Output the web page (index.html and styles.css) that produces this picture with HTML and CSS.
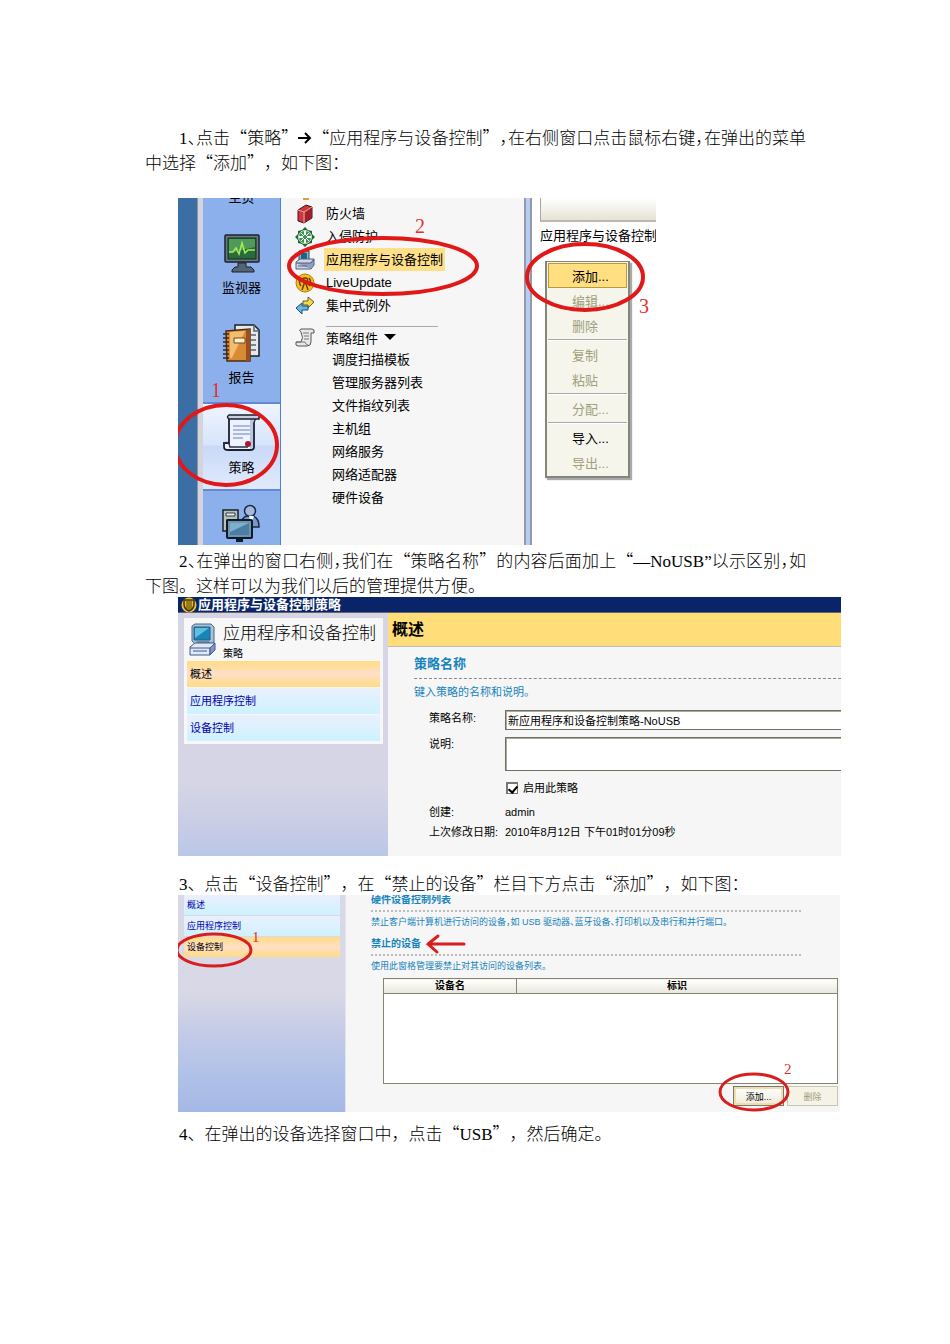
FILE: index.html
```html
<!DOCTYPE html>
<html lang="zh-CN">
<head>
	<meta charset="utf-8">
	<meta name="viewport" content="width=device-width, initial-scale=1.0">
	<link rel="stylesheet" href="styles.css">
	<title>禁用USB设备</title>
</head>
<body>
	<main>
		<p><span class="lat">1</span><span class="half">、</span>点击“策略”<svg class="arrow" width="14" height="12" viewBox="0 0 14 12"><path d="M0 6h12M7 1l5 5-5 5" fill="none" stroke="#000" stroke-width="2"/></svg>“应用程序与设备控制”<span class="half">，</span>在右侧窗口点击鼠标右键<span class="half">，</span>在弹出的菜单中选择“添加”，如下图：</p>

		<figure class="shot console">
			<div class="desktop"></div>
			<nav class="side">
				<a href="#" class="side-item"><span class="side-icon"></span>主页</a>
				<a href="#" class="side-item">
					<svg class="side-icon" width="40" height="40" viewBox="0 0 40 40">
						<path d="M16 30h8v4h5l3 3v2H10v-2l3-3h3z" fill="#566574" stroke="#18222c"/>
						<rect x="3" y="2" width="34" height="27" rx="1" fill="#6a7880" stroke="#18222c" stroke-width="1.5"/>
						<rect x="6" y="5" width="28" height="21" fill="#286b3c" stroke="#102d1b"/>
						<path d="M7 6h26v8L7 20z" fill="#4f9a59"/>
						<path d="M7 19h4l3-4 3 6 3-11 3 10 3-3h7" fill="none" stroke="#a9ec55" stroke-width="1.5"/>
					</svg>
					监视器
				</a>
				<a href="#" class="side-item">
					<svg class="side-icon" width="40" height="40" viewBox="0 0 40 40">
						<path d="M13 2h19l5 5v26H13z" fill="#e5e9eb" stroke="#1c2025" stroke-width="1.5"/>
						<path d="M32 2v6h5M29 12h5M29 17h5M29 22h5M29 27h5" fill="none" stroke="#59646c" stroke-width="1.5"/>
						<path d="M4 8l24-2v32H5z" fill="#d88a35" stroke="#4b2b12" stroke-width="1.5"/>
						<path d="M8 9l15-1-13 27H8z" fill="#f3bd70"/>
						<path d="M24 7l4-1v32h-4z" fill="#9b4e20"/>
						<path d="M12 15h11v5H12z" fill="#fff0c8" stroke="#6a4824"/>
						<path d="M1 11h6M1 15h6M1 19h6M1 23h6M1 27h6M1 31h6M1 35h6" stroke="#38291c" stroke-width="1.5"/>
					</svg>
					报告
				</a>
				<a href="#" class="side-item active">
					<svg class="side-icon" width="40" height="40" viewBox="0 0 40 40">
						<path d="M7 4h27l-2 5v25q0 3-4 3H6q-4 0-4-3v-4h5z" fill="#eef2fd" stroke="#1a2030" stroke-width="1.8"/>
						<path d="M28 6h5l-2 4v24q-1 2-3 2z" fill="#b9c6e6"/>
						<path d="M7 2h30v4H7q-3-2 0-4z" fill="#c5d0e3" stroke="#1a2030" stroke-width="1.5"/>
						<path d="M2 30q5-2 6 4H26" fill="none" stroke="#27304a" stroke-width="1.5"/>
						<path d="M11 13h17M11 17h17M11 21h17M11 25h10" stroke="#90a8d9" stroke-width="1.5"/>
						<circle cx="26" cy="31" r="3" fill="#a51d2d"/>
					</svg>
					策略
				</a>
				<a href="#" class="side-item">
					<svg class="side-icon" width="40" height="40" viewBox="0 0 40 40">
						<path d="M19 24q0-10 6-11h6q6 2 6 11z" fill="#7b98c8" stroke="#192943" stroke-width="1.5"/>
						<circle cx="28" cy="8" r="5.5" fill="#a2badd" stroke="#192943" stroke-width="1.5"/>
						<path d="M27 13l2 8 3-8" fill="#fff"/>
						<rect x="1" y="7" width="15" height="21" fill="#b8c2bd" stroke="#18212a" stroke-width="1.5"/>
						<path d="M4 10h9v3H4zM4 17h9" fill="#eee" stroke="#303840"/>
						<rect x="5" y="17" width="25" height="18" rx="1" fill="#7192b0" stroke="#0d1a28" stroke-width="2"/>
						<path d="M8 20h19v12H8z" fill="#4a7fa3"/>
						<path d="M8 20h19L8 29z" fill="#7fb0ca"/>
						<path d="M14 36h7v3h-7z" fill="#111d29"/>
					</svg>
				</a>
			</nav>
			<div class="policy-list">
				<ul>
					<li>
						<svg width="20" height="20" viewBox="0 0 20 20"><path d="M3 6l8-5 6 2v11l-8 5-6-2z" fill="#c93940" stroke="#4b1118"/><path d="M3 6l6 2 8-5M9 8v11" fill="none" stroke="#f4a0a0"/><path d="M10 9l6-5v10l-6 4z" fill="#9d202b"/></svg>
						<a href="#">防火墙</a>
					</li>
					<li>
						<svg width="20" height="20" viewBox="0 0 20 20"><path d="M10 0l3 3 4 1 0 3 3 3-3 3 0 3-4 1-3 3-3-3-4-1 0-3-3-3 3-3 0-3 4-1z" fill="#176b30"/><circle cx="10" cy="10" r="6.5" fill="#3f9650" stroke="#cfe8d2"/><path d="M10 4v4M10 12v4M4 10h4M12 10h4" stroke="#fff" stroke-width="2"/><path d="M6 6l3 3M11 11l3 3M14 6l-3 3M9 11l-3 3" stroke="#fff"/></svg>
						<a href="#">入侵防护</a>
					</li>
					<li>
						<svg width="20" height="20" viewBox="0 0 20 20"><path d="M4 1h10v10H4z" fill="#8eb5cf" stroke="#30485b"/><path d="M6 3h6v6H6z" fill="#176782"/><path d="M1 12l4-3h14l-3 4v6H1z" fill="#cfd6ea" stroke="#53617a"/><path d="M1 13h15l3-4v6l-3 4" fill="#929fbf" stroke="#53617a"/><path d="M3 16h9" stroke="#53617a"/></svg>
						<a href="#" class="picked">应用程序与设备控制</a>
					</li>
					<li>
						<svg width="20" height="20" viewBox="0 0 20 20"><circle cx="10" cy="10" r="9" fill="#f9bc1d" stroke="#b57b08"/><path d="M10 8l-3 9M10 8l3 9M6 13q-3-4 0-8M14 13q3-4 0-8M8 9q-2-4 2-4 4 0 2 4" fill="none" stroke="#5e430a" stroke-width="1.5"/></svg>
						<a href="#">LiveUpdate</a>
					</li>
					<li>
						<svg width="20" height="20" viewBox="0 0 20 20"><path d="M8 5h5V1l6 5-6 6V9H8z" fill="#f3d948" stroke="#665b23"/><path d="M13 10H7V7l-6 5 6 6v-4h6z" fill="#69b7e4" stroke="#1b4d70"/></svg>
						<a href="#">集中式例外</a>
					</li>
				</ul>
				<div class="components">
					<svg width="20" height="20" viewBox="0 0 20 20"><path d="M6 2h11q3 0 2 4h-3v9q0 4-4 4H3q-3 0-2-4h5q3-4 0-10-3-2 0-3z" fill="#e8e8e8" stroke="#555"/><path d="M8 6h6M9 9h5M9 12h5M1 15h9q1 3 3 3" fill="none" stroke="#777"/></svg>
					策略组件
					<svg width="12" height="7" viewBox="0 0 12 7"><path d="M0 0h12L6 6z"/></svg>
				</div>
				<ul class="sub">
					<li><a href="#">调度扫描模板</a></li>
					<li><a href="#">管理服务器列表</a></li>
					<li><a href="#">文件指纹列表</a></li>
					<li><a href="#">主机组</a></li>
					<li><a href="#">网络服务</a></li>
					<li><a href="#">网络适配器</a></li>
					<li><a href="#">硬件设备</a></li>
				</ul>
			</div>
			<div class="splitter"></div>
			<div class="detail">
				<div class="column-head"></div>
				<div class="detail-title">应用程序与设备控制</div>
				<div class="menu">
					<button class="hot">添加...</button>
					<button disabled>编辑...</button>
					<button disabled>删除</button>
					<hr>
					<button disabled>复制</button>
					<button disabled>粘贴</button>
					<hr>
					<button disabled>分配...</button>
					<hr>
					<button>导入...</button>
					<button disabled>导出...</button>
				</div>
			</div>
			<svg class="marks" width="478" height="347">
				<g fill="none" stroke="#e01818" stroke-width="4">
					<ellipse cx="48" cy="247" rx="51" ry="40"/>
					<ellipse cx="205" cy="68" rx="94" ry="28"/>
					<ellipse cx="407" cy="79" rx="58" ry="33"/>
				</g>
				<text x="33" y="199">1</text>
				<text x="237" y="35">2</text>
				<text x="461" y="115">3</text>
			</svg>
		</figure>

		<p><span class="lat">2</span><span class="half">、</span>在弹出的窗口右侧<span class="half">，</span>我们在“策略名称”的内容后面加上“<span class="lat">—NoUSB”</span>以示区别<span class="half">，</span>如下图。这样可以为我们以后的管理提供方便。</p>

		<figure class="shot policy">
			<div class="titlebar">
				<svg width="16" height="16" viewBox="0 0 16 16"><circle cx="8" cy="8" r="7.5" fill="#f5c52d"/><path d="M3 3h10v4q0 5-5 7-5-2-5-7z" fill="#edbb20" stroke="#3a3312" stroke-width="1.5"/><path d="M6 4v8M8 4v9M10 4v8" stroke="#4b3d10"/></svg>
				应用程序与设备控制策略
			</div>
			<div class="policy-body">
				<div class="policy-side">
					<div class="card">
						<div class="card-head">
							<svg width="28" height="34" viewBox="0 0 28 34">
								<path d="M6 1h16l3 3v15l-3 2H6l-3-3V3z" fill="#a6c3db" stroke="#496783"/>
								<path d="M5 4h16v13H5z" fill="#1586b7" stroke="#295c80"/>
								<path d="M6 5h14L6 15z" fill="#61bfdd"/>
								<path d="M8 18h12l3 4H6z" fill="#718ca9"/>
								<path d="M1 24l5-4h20l-5 5v7H1z" fill="#e0e7f7" stroke="#405a8b"/>
								<path d="M21 25l5-5v7l-5 5z" fill="#8096c3" stroke="#405a8b"/>
								<path d="M1 25h20M4 28h14" stroke="#405a8b"/>
							</svg>
							<div>
								<h2>应用程序和设备控制</h2>
								<small>策略</small>
							</div>
						</div>
						<nav class="tabs">
							<a href="#" class="current">概述</a>
							<a href="#">应用程序控制</a>
							<a href="#">设备控制</a>
						</nav>
					</div>
				</div>
				<div class="policy-main">
					<h2>概述</h2>
					<section>
						<h3>策略名称</h3>
						<p class="hint">键入策略的名称和说明。</p>
						<form>
							<label for="name">策略名称:</label>
							<input type="text" id="name" value="新应用程序和设备控制策略-NoUSB">
							<label for="desc">说明:</label>
							<textarea id="desc"></textarea>
							<label class="check"><input type="checkbox" checked>启用此策略</label>
							<span>创建:</span>
							<span>admin</span>
							<span>上次修改日期:</span>
							<span>2010年8月12日 下午01时01分09秒</span>
						</form>
					</section>
				</div>
			</div>
		</figure>

		<p class="step3"><span class="lat">3</span>、点击“设备控制”，在“禁止的设备”栏目下方点击“添加”，如下图：</p>

		<figure class="shot devices">
			<div class="devices-side">
				<nav class="tabs">
					<a href="#">概述</a>
					<a href="#">应用程序控制</a>
					<a href="#" class="current">设备控制</a>
				</nav>
			</div>
			<div class="devices-main">
				<h3>硬件设备控制列表</h3>
				<p class="hint">禁止客户端计算机进行访问的设备，如 USB 驱动器、蓝牙设备、打印机以及串行和并行端口。</p>
				<h3>禁止的设备</h3>
				<p class="hint">使用此窗格管理要禁止对其访问的设备列表。</p>
				<table>
					<thead>
						<tr><th class="device-name">设备名</th><th>标识</th></tr>
					</thead>
					<tbody>
						<tr><td colspan="2"></td></tr>
					</tbody>
				</table>
				<div class="actions">
					<button class="add">添加...</button>
					<button disabled>删除</button>
				</div>
			</div>
			<svg class="marks small" width="662" height="217">
				<g fill="none" stroke="#d81e1e" stroke-width="3">
					<ellipse cx="36" cy="55" rx="37" ry="16"/>
					<ellipse cx="576" cy="197" rx="34" ry="18"/>
					<path d="M286 49h-36M260 41l-10 8 9 8" stroke-linecap="round"/>
				</g>
				<text x="74" y="47">1</text>
				<text x="606" y="179">2</text>
			</svg>
		</figure>

		<p class="step4"><span class="lat">4</span>、在弹出的设备选择窗口中，点击“<span class="lat">USB</span>”，然后确定。</p>
	</main>
</body>
</html>
```

FILE: styles.css
```css
* {
	box-sizing: border-box;
}
body {
	margin: 0;
	background-color: white;
	color: black;
	font-family: "Noto Sans CJK SC", sans-serif;
}
main {
	padding: 124px 109px 180px 145px;
}
main > p {
	margin: 0 35px 0 0;
	font-size: 17px;
	font-weight: 300;
	line-height: 25px;
	text-indent: 34px;
	text-align: justify;
	text-spacing-trim: space-all;
}
.lat {
	font-family: "Liberation Serif", serif;
	font-weight: 400;
	line-height: 1;
}
.half {
	font-feature-settings: "halt";
}
a {
	color: inherit;
	text-decoration: none;
}
ul {
	list-style: none;
	margin: 0;
	padding: 0;
}
button {
	font-family: inherit;
}

/* figures */
.shot {
	position: relative;
	overflow: hidden;
	margin: 0 0 0 33px;
	font-family: "Liberation Sans", "Noto Sans CJK SC", sans-serif;
	background-color: #f6f6f6;
}
.marks {
	position: absolute;
	left: 0;
	top: 0;
	pointer-events: none;
}
.marks text {
	font-family: "Liberation Serif", serif;
	font-size: 20px;
	fill: #e03030;
}
.marks.small text {
	font-size: 15px;
}

/* console */
.console {
	display: flex;
	max-width: 478px;
	height: 347px;
	margin-top: 24px;
	margin-bottom: 2px;
	font-size: 13px;
}
.desktop {
	width: 25px;
	background-color: #3a6ea5;
	border-right: 5px solid #d4d4dc;
	box-shadow: inset -1px 0 #8996aa;
}
.side {
	width: 78px;
	background-color: #8cb0ec;
	border-right: 1px solid #4c80d4;
}
.side-item {
	display: flex;
	flex-direction: column;
	align-items: center;
	gap: 7px;
	height: 90px;
	padding-top: 9px;
	line-height: 16px;
}
.side-item:first-child {
	margin-top: -64px;
}
.side-item.active {
	height: 87px;
	margin-bottom: 3px;
	background: linear-gradient(#f0f5ff, #d7e4fb 48%, #c8daf8 50%, #e0eafc);
	border-bottom: 2px solid #6488d8;
	box-shadow: 0 -2px #6488d8;
}
.side-icon {
	flex: none;
	height: 40px;
}
.policy-list {
	width: 243px;
	padding: 4px 14px 0;
	background: linear-gradient(#d9a03a, #d9a03a) 22px 0 / 6px 2px no-repeat;
}
.policy-list li {
	display: flex;
	align-items: center;
	gap: 9px;
	height: 23px;
}
.policy-list li a {
	padding: 0 2px;
	line-height: 23px;
}
.policy-list .picked {
	background-color: #ffe08a;
}
.components {
	display: flex;
	align-items: center;
	gap: 6px;
	height: 22px;
	margin-top: 9px;
	background: linear-gradient(#aaa, #aaa) 31px 0 / 112px 1px no-repeat;
}
.components svg:first-child {
	margin-right: 5px;
}
.sub {
	padding-left: 35px;
}
.splitter {
	width: 8px;
	background-color: #b4ccf6;
	border: solid #9499a5;
	border-width: 0 2px;
}
.detail {
	flex: 1;
	min-width: 0;
	padding-left: 8px;
	background-color: white;
}
.column-head {
	height: 24px;
	background: linear-gradient(#fff, #e6e3d5);
	border-left: 1px solid #aaa797;
	border-bottom: 2px solid #bbb8a8;
}
.detail-title {
	line-height: 28px;
	white-space: nowrap;
}
.menu {
	width: 85px;
	margin: 11px 0 0 5px;
	padding: 1px;
	background-color: #f6f5ec;
	border: 2px solid #85867b;
	border-top-width: 1px;
	box-shadow: 2px 2px 1px #aaa;
}
.menu button {
	display: block;
	width: 100%;
	height: 25px;
	padding: 0 0 0 23px;
	border: 1px solid transparent;
	background: none;
	font-size: 13px;
	text-align: left;
	color: black;
}
.menu button:disabled {
	color: #a19f7c;
}
.menu .hot {
	background-color: #ffdf80;
	border-color: #b99b38;
}
.menu hr {
	height: 2px;
	margin: 1px 0;
	border: 0;
	border-top: 1px solid #aaa;
	background-color: white;
}

/* policy window */
.titlebar {
	display: flex;
	align-items: center;
	gap: 1px;
	height: 16px;
	padding-left: 3px;
	background-color: #0a246a;
	border-bottom: 1px solid #666;
	color: white;
	font-size: 13px;
	font-weight: bold;
	line-height: 15px;
}
.policy-body {
	display: flex;
	height: 243px;
}
.policy-side {
	width: 210px;
	padding: 5px 5px 0 6px;
	background: linear-gradient(#d5d5e5 70%, #c6cbe6 90%, #b9c8e6);
}
.card {
	padding: 3px;
	background-color: #f7f7f7;
}
.card-head {
	display: flex;
	gap: 6px;
	height: 40px;
	padding-left: 2px;
}
.card-head svg {
	margin-top: 2px;
}
.card-head h2 {
	margin: 0;
	font-size: 17px;
	font-weight: 300;
	line-height: 26px;
	white-space: nowrap;
}
.card-head small {
	display: block;
	font-size: 10px;
	line-height: 14px;
}
.tabs a {
	display: block;
	height: 26px;
	margin-bottom: 1px;
	padding-left: 3px;
	background: linear-gradient(#ebf0fd, #cdf2ff);
	color: #0000b0;
	font-size: 11px;
	line-height: 26px;
}
.tabs a:last-child {
	margin-bottom: 0;
}
.tabs .current {
	background: linear-gradient(#ffdc82, #ffdfc8 50%, #ffdc82);
	color: black;
}
.policy-main {
	flex: 1;
	min-width: 0;
}
.policy-main h2 {
	margin: 0;
	padding-left: 4px;
	background-color: #ffde7a;
	border-bottom: 1px solid #bbb;
	font-size: 16px;
	line-height: 33px;
}
.policy-main section {
	padding: 6px 0 0 26px;
}
h3 {
	margin: 0;
	color: #1684bc;
}
.policy-main h3 {
	border-bottom: 1px dashed #888;
	font-size: 13px;
	line-height: 22px;
	padding-bottom: 3px;
}
.hint {
	margin: 0;
	color: #1684bc;
	white-space: nowrap;
}
.policy-main .hint {
	font-size: 11px;
	line-height: 26px;
}
form {
	display: grid;
	grid-template-columns: 76px 1fr;
	padding: 5px 0 0 15px;
	font-size: 11px;
	line-height: 16px;
	white-space: nowrap;
}
form input[type=text],
textarea {
	display: block;
	width: 100%;
	height: 20px;
	margin: 0;
	padding: 0 2px;
	background-color: white;
	border: 1px solid #6e7060;
	border-right: 0;
	border-radius: 0;
	box-shadow: inset 1px 1px #aaa99c;
	color: black;
	font-family: inherit;
	font-size: 11px;
	resize: none;
}
form textarea {
	height: 34px;
	margin: 7px 0 9px;
}
form label[for=desc] {
	padding-top: 6px;
}
.check {
	grid-column: 2;
	display: flex;
	align-items: center;
	gap: 5px;
	height: 16px;
	margin-bottom: 8px;
}
.check input {
	appearance: none;
	width: 12px;
	height: 12px;
	margin: 0 0 0 1px;
	background-color: white;
	border: 1px solid #777;
	border-width: 2px 1px 1px 2px;
}
.check input:checked::before {
	content: "";
	display: block;
	width: 4px;
	height: 7px;
	margin: 0 0 0 2px;
	border: solid black;
	border-width: 0 2px 2px 0;
	transform: rotate(40deg);
}
form span {
	height: 20px;
}

/* device control */
main > .step3 {
	margin-top: 14px;
}
.devices {
	display: flex;
	height: 217px;
	margin-right: 1px;
}
.devices-side {
	width: 168px;
	padding: 0 5px 0 6px;
	background: linear-gradient(#d8d8e6 45%, #c3cae7 65%, #b1c2e8 82%, #a5b7e5);
	border-right: 1px solid #e2e4ed;
}
.devices-side .tabs a {
	height: 20px;
	font-size: 9px;
	line-height: 20px;
}
.devices-main {
	flex: 1;
	min-width: 0;
	padding: 0 2px 0 25px;
}
.devices-main h3 {
	height: 22px;
	margin: 0 37px 0 0;
	border-bottom: 2px dotted #bbb;
	font-size: 10px;
	line-height: 20px;
}
.devices-main h3:first-child {
	margin-top: -5px;
}
.devices-main .hint {
	height: 22px;
	font-size: 9px;
	line-height: 20px;
	font-feature-settings: "halt";
}
table {
	width: calc(100% - 12px);
	margin-left: 12px;
	border: 1px solid #85866f;
	border-collapse: collapse;
	table-layout: fixed;
	background-color: white;
}
th {
	height: 15px;
	padding: 0;
	background: linear-gradient(#fff, #e9e7da);
	border: 1px solid #85866f;
	font-size: 10px;
	line-height: 12px;
}
.device-name {
	width: 133px;
}
td {
	height: 90px;
	padding: 0;
}
.actions {
	display: flex;
	justify-content: flex-end;
	gap: 3px;
	padding-top: 2px;
}
.actions button {
	width: 51px;
	height: 20px;
	padding: 0;
	background: linear-gradient(#fff, #eeeada);
	border: 1px solid #77776c;
	box-shadow: inset 0 0 0 2px #f0dfae;
	color: black;
	font-size: 9px;
}
.actions button:disabled {
	background: #f5f2e6;
	border-color: #c9c5b0;
	box-shadow: none;
	color: #a19f7c;
}
main > .step4 {
	margin-top: 8px;
}
```
